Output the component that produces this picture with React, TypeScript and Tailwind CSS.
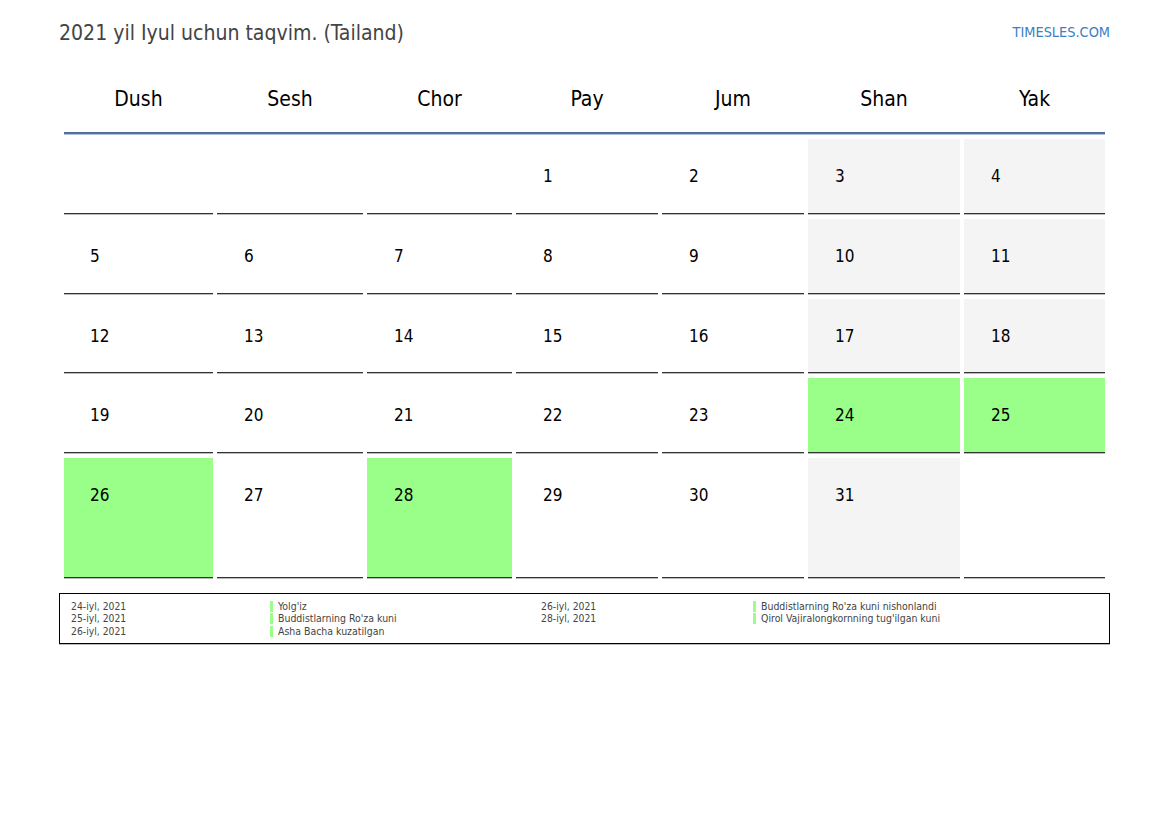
const days = ["Dush", "Sesh", "Chor", "Pay", "Jum", "Shan", "Yak"];

const weeks: (number | null)[][] = [
  [null, null, null, 1, 2, 3, 4],
  [5, 6, 7, 8, 9, 10, 11],
  [12, 13, 14, 15, 16, 17, 18],
  [19, 20, 21, 22, 23, 24, 25],
  [26, 27, 28, 29, 30, 31, null],
];

const holidays = [24, 25, 26, 28];
const rowHeights = ["h-[75px]", "h-[75px]", "h-[74px]", "h-[75px]", "h-[120px]"];

const leftNotes = [
  ["24-iyl, 2021", "Yolg'iz"],
  ["25-iyl, 2021", "Buddistlarning Ro'za kuni"],
  ["26-iyl, 2021", "Asha Bacha kuzatilgan"],
];
const rightNotes = [
  ["26-iyl, 2021", "Buddistlarning Ro'za kuni nishonlandi"],
  ["28-iyl, 2021", "Qirol Vajiralongkornning tug'ilgan kuni"],
];

const grid = "grid grid-cols-[149px_146px_145px_142px_142px_152px_141px] gap-x-[4px]";

function cellBg(day: number | null, col: number) {
  if (day !== null && holidays.includes(day)) return "bg-[#99ff88]";
  if (day !== null && col >= 5) return "bg-[#f4f4f4]";
  return "bg-white";
}

function Notes({ rows, dateW }: { rows: string[][]; dateW: string }) {
  return (
    <div className="flex flex-col">
      {rows.map(([date, name]) => (
        <div key={date + name} className="flex h-[12.5px] items-center">
          <span className={`${dateW} text-[10.3px] leading-[11px]`}>{date}</span>
          <span className="h-[11px] border-l-[3px] border-[#99ff88] pl-[5px] text-[10.45px] leading-[11px]">{name}</span>
        </div>
      ))}
    </div>
  );
}

export default function App() {
  return (
    <div className="h-[827px] w-[1169px] overflow-hidden bg-white font-['DejaVu_Sans',sans-serif] font-stretch-condensed">
      <div className="flex items-start justify-between pl-[59px] pr-[59px] pt-[20px]">
        <h1 className="text-[21.05px] leading-[26px] text-[#444444]">2021 yil Iyul uchun taqvim. (Tailand)</h1>
        <a className="pt-[2px] text-[14.4px] leading-[20px] text-[#3a80c4]">TIMESLES.COM</a>
      </div>

      <div className="ml-[64px] w-[1041px]">
        <div className={`${grid} mt-[21px] h-[67px] border-b-2 border-[#4f709e] pb-[2px] shadow-[0_1px_0_#b4c3d6]`}>
          {days.map((d) => (
            <div key={d} className="flex items-center justify-center pt-[3px] text-[21px] text-black">
              {d}
            </div>
          ))}
        </div>

        <div className="mt-[5px] flex flex-col gap-y-[5px]">
          {weeks.map((week, r) => (
            <div key={r} className={`${grid} ${rowHeights[r]}`}>
              {week.map((day, c) => (
                <div
                  key={c}
                  className={`${cellBg(day, c)} border-b border-[#333333] pt-[26px] text-[17px] leading-[22px] text-black shadow-[0_1px_0_#bbbbbb] ${
                    c === 0 ? "pl-[26px]" : "pl-[27px]"
                  }`}
                >
                  {day}
                </div>
              ))}
            </div>
          ))}
        </div>
      </div>

      <div className="ml-[59px] mt-[15px] flex h-[51px] w-[1051px] border border-black pl-[11px] pt-[6px] text-[#444444] shadow-[0_1px_0_#bbbbbb]">
        <div className="w-[470px]">
          <Notes rows={leftNotes} dateW="w-[199px]" />
        </div>
        <Notes rows={rightNotes} dateW="w-[212px]" />
      </div>
    </div>
  );
}
